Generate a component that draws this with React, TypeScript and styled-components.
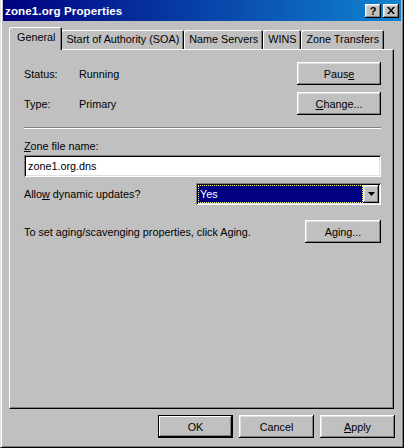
import React from "react";
import styled, { createGlobalStyle, css } from "styled-components";

const FACE = "#c0c0c0";
const FONT = `"Liberation Sans", Arial, sans-serif`;
const SIZE = "10.8px";

const GlobalStyle = createGlobalStyle`
  html, body { margin: 0; padding: 0; background: ${FACE}; }
  body { font-family: ${FONT}; font-size: ${SIZE}; color: #000; }
  * { box-sizing: border-box; }
`;

const raised = css`
  box-shadow: inset -1px -1px #000, inset 1px 1px #fff, inset -2px -2px #808080,
    inset 2px 2px #dfdfdf;
`;

const sunken = css`
  box-shadow: inset 1px 1px #808080, inset -1px -1px #fff, inset 2px 2px #000,
    inset -2px -2px #dfdfdf;
`;

const Window = styled.div`
  width: 404px;
  height: 448px;
  background: ${FACE};
  border-style: solid;
  border-width: 0 1px 1px 1px;
  border-color: #dfdfdf #000 #000 #dfdfdf;
  padding: 0 2px 2px 2px;
  box-shadow: inset 1px 0 #fff, inset -1px -1px #808080;
  display: flex;
  flex-direction: column;
`;

const TitleBar = styled.div`
  height: 21px;
  background: linear-gradient(to right, #000080, #1084d0);
  display: flex;
  align-items: center;
  padding: 0 2px 0 2px;
  flex-shrink: 0;
`;

const Title = styled.div`
  flex: 1;
  color: #fff;
  font-weight: bold;
  font-size: 11.6px;
  letter-spacing: 0.1px;
`;

const TitleButton = styled.div`
  width: 16px;
  height: 14px;
  background: ${FACE};
  ${raised};
  display: flex;
  align-items: center;
  justify-content: center;
  font-weight: bold;
  font-size: 11px;
  margin-left: 2px;
`;

const Body = styled.div`
  flex: 1;
  display: flex;
  flex-direction: column;
  padding: 6px 7px 0 6px;
`;

const TabStrip = styled.div`
  height: 22px;
  display: flex;
  align-items: flex-end;
  padding-left: 1px;
  position: relative;
  z-index: 1;
`;

const Tab = styled.div<{ $active?: boolean }>`
  background: ${FACE};
  border-top-left-radius: 2px;
  border-top-right-radius: 2px;
  box-shadow: inset 1px 1px #fff, inset -1px 0 #000, inset -2px 0 #808080;
  display: flex;
  align-items: center;
  justify-content: center;
  white-space: nowrap;
  ${(p) =>
    p.$active
      ? css`
          height: 23px;
          margin-bottom: -1px;
          padding: 0 7px 3px 8px;
          margin-left: -1px;
          margin-right: -1px;
          position: relative;
          z-index: 2;
        `
      : css`
          height: 19px;
          padding: 0 5px 1px 5px;
        `}
`;

const Panel = styled.div`
  height: 360px;
  border-style: solid;
  border-width: 1px;
  border-color: #fff #000 #000 #fff;
  box-shadow: inset -1px -1px #808080;
  padding: 12px 12px 0 14px;
  display: flex;
  flex-direction: column;
`;

const InfoGrid = styled.div`
  display: grid;
  grid-template-columns: 55px 1fr auto;
  row-gap: 7px;
  align-items: center;
`;

const Button = styled.button<{ $w?: number; $default?: boolean }>`
  width: ${(p) => p.$w ?? 75}px;
  height: 23px;
  border: none;
  padding: 0;
  background: ${FACE};
  font-family: ${FONT};
  font-size: ${SIZE};
  color: #000;
  ${(p) =>
    p.$default
      ? css`
          box-shadow: inset 0 0 0 1px #000, inset -2px -2px #000, inset 2px 2px #fff,
            inset -3px -3px #808080;
        `
      : raised};
`;

const Separator = styled.div`
  height: 2px;
  border-top: 1px solid #808080;
  border-bottom: 1px solid #fff;
  margin: 12px 0 0 0;
`;

const FieldLabel = styled.div`
  margin-top: 11px;
  height: 13px;
  line-height: 13px;
`;

const TextBox = styled.div`
  margin-top: 2px;
  height: 22px;
  background: #fff;
  ${sunken};
  display: flex;
  align-items: center;
  padding: 0 4px;
`;

const Row = styled.div<{ $mt: number }>`
  margin-top: ${(p) => p.$mt}px;
  display: flex;
  align-items: center;
  justify-content: space-between;
`;

const Combo = styled.div`
  width: 185px;
  height: 22px;
  background: #fff;
  ${sunken};
  display: flex;
  align-items: stretch;
  padding: 2px;
`;

const ComboValue = styled.div`
  flex: 1;
  background: #000080;
  color: #fff;
  outline: 1px dotted #ffff80;
  outline-offset: -1px;
  display: flex;
  align-items: center;
  padding-left: 2px;
`;

const DropButton = styled.div`
  width: 16px;
  background: ${FACE};
  ${raised};
  display: flex;
  align-items: center;
  justify-content: center;
`;

const Footer = styled.div`
  display: flex;
  justify-content: flex-end;
  gap: 6px;
  padding: 6px 0 0 0;
  margin-right: -1px;
`;

export default function App() {
  return (
    <>
      <GlobalStyle />
      <Window>
        <TitleBar>
          <Title>zone1.org Properties</Title>
          <TitleButton>?</TitleButton>
          <TitleButton>
            <svg width="8" height="7" viewBox="0 0 8 7">
              <path d="M0 0h2l2 2.5L6 0h2L5 3.5 8 7H6L4 4.5 2 7H0l3-3.5z" fill="#000" />
            </svg>
          </TitleButton>
        </TitleBar>
        <Body>
          <TabStrip>
            <Tab $active>General</Tab>
            <Tab>Start of Authority (SOA)</Tab>
            <Tab>Name Servers</Tab>
            <Tab>WINS</Tab>
            <Tab>Zone Transfers</Tab>
          </TabStrip>
          <Panel>
            <InfoGrid>
              <span>Status:</span>
              <span>Running</span>
              <Button $w={84}>
                Paus<u>e</u>
              </Button>
              <span>Type:</span>
              <span>Primary</span>
              <Button $w={84}>
                <u>C</u>hange...
              </Button>
            </InfoGrid>
            <Separator />
            <FieldLabel>
              <u>Z</u>one file name:
            </FieldLabel>
            <TextBox>zone1.org.dns</TextBox>
            <Row $mt={6}>
              <span>
                Allo<u>w</u> dynamic updates?
              </span>
              <Combo>
                <ComboValue>Yes</ComboValue>
                <DropButton>
                  <svg width="7" height="4" viewBox="0 0 7 4">
                    <path d="M0 0h7L3.5 4z" fill="#000" />
                  </svg>
                </DropButton>
              </Combo>
            </Row>
            <Row $mt={15}>
              <span>To set aging/scavenging properties, click Aging.</span>
              <Button $w={76}>Aging...</Button>
            </Row>
          </Panel>
          <Footer>
            <Button $default>OK</Button>
            <Button>Cancel</Button>
            <Button>
              <u>A</u>pply
            </Button>
          </Footer>
        </Body>
      </Window>
    </>
  );
}
